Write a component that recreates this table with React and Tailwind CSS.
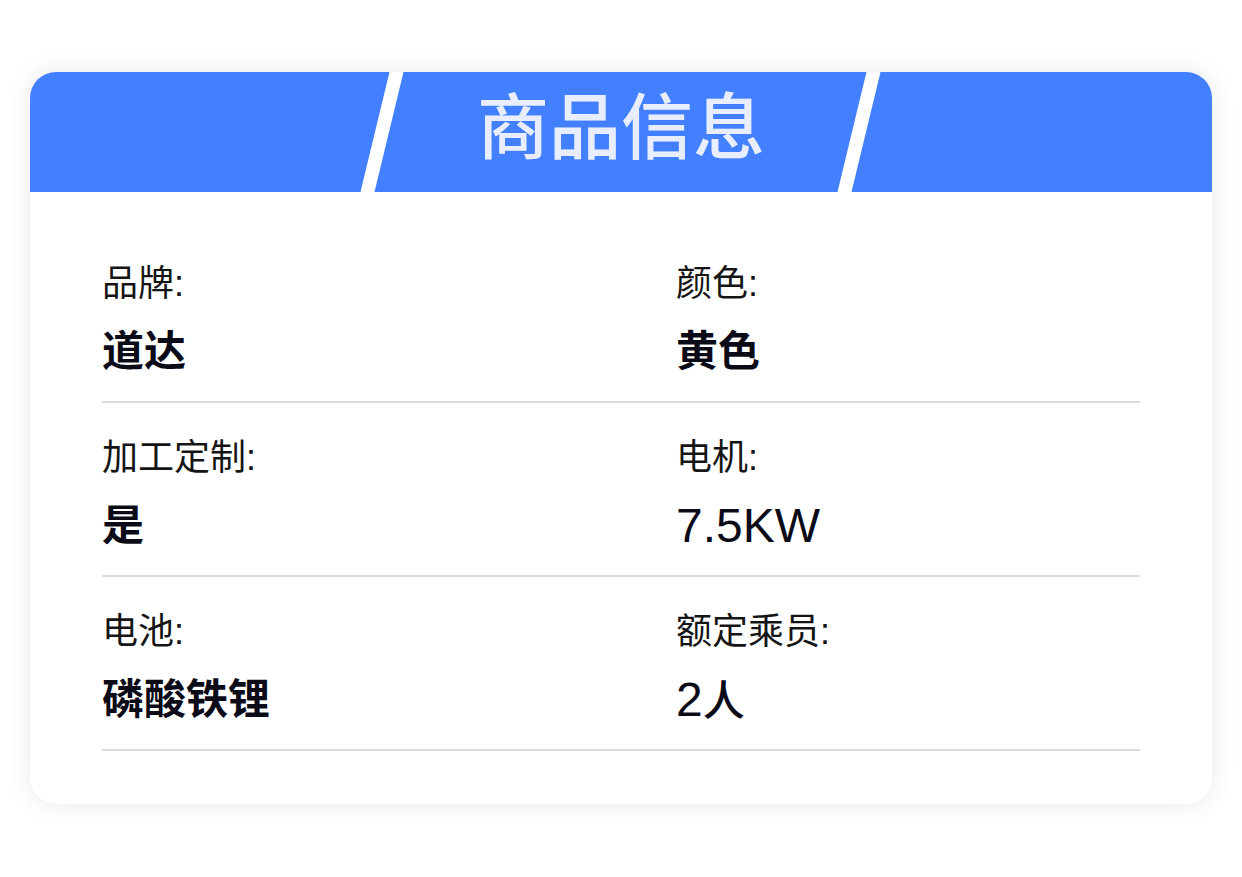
import React from 'react';

const items = [
  [
    { label: '品牌:', value: '道达' },
    { label: '颜色:', value: '黄色' },
  ],
  [
    { label: '加工定制:', value: '是' },
    { label: '电机:', value: <span className="text-[48px] font-medium">7.5KW</span> },
  ],
  [
    { label: '电池:', value: '磷酸铁锂' },
    {
      label: '额定乘员:',
      value: (
        <span className="font-medium">
          <span className="text-[48px]">2</span>
          <span className="text-[42px]">人</span>
        </span>
      ),
    },
  ],
];

const font = "font-['Liberation_Sans','Noto_Sans_CJK_SC',sans-serif]";

function Cell({ label, value }) {
  const plain = typeof value === 'string';
  return (
    <div className="flex flex-col">
      <div className="text-[36px] leading-[54px] text-[#151515]">{label}</div>
      <div
        className={`mt-2 h-[66px] leading-[66px] text-[#0b0b18] ${
          plain ? 'text-[42px] font-bold' : ''
        }`}
      >
        {value}
      </div>
    </div>
  );
}

export default function App() {
  return (
    <div className={`min-h-screen bg-white pt-[72px] px-[30px] ${font}`}>
      <div className="rounded-[26px] bg-white overflow-hidden shadow-[0_0_26px_rgba(0,0,0,0.09)]">
        {/* 标题栏 */}
        <div className="relative h-[120px] bg-[#4380ff] flex items-center justify-center">
          <div className="absolute top-0 left-[345px] h-full w-[14px] bg-white -skew-x-[13.6deg]" />
          <div className="absolute top-0 left-[822px] h-full w-[14px] bg-white -skew-x-[13.6deg]" />
          <span className="text-[72px] leading-none font-medium text-[#e8eeff] -mt-2">商品信息</span>
        </div>

        <div className="px-[72px] pt-[37px] pb-[53px]">
          {items.map((row, i) => (
            <div
              key={i}
              className="grid grid-cols-[574px_1fr] pt-[28px] pb-[16px] border-b-2 border-[#dcdce0]"
            >
              {row.map((c) => (
                <Cell key={c.label} {...c} />
              ))}
            </div>
          ))}
        </div>
      </div>
    </div>
  );
}
